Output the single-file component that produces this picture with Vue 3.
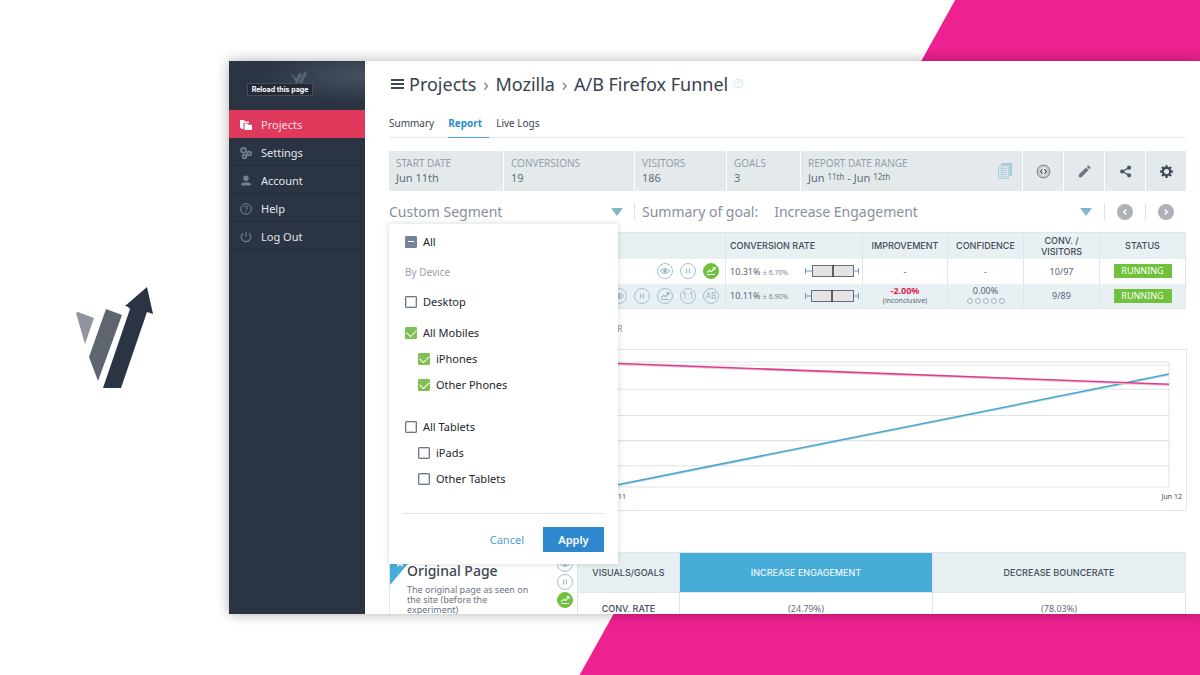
<script setup>
import { ref } from 'vue'

const nav = [
  { label: 'Projects', icon: 'folders' },
  { label: 'Settings', icon: 'cogs' },
  { label: 'Account', icon: 'user' },
  { label: 'Help', icon: 'help' },
  { label: 'Log Out', icon: 'power' },
]
const activeNav = ref('Projects')

const tabs = ['Summary', 'Report', 'Live Logs']
const activeTab = ref('Report')

const stats = [
  { key: 'start', label: 'START DATE', value: 'Jun 11th' },
  { key: 'conversions', label: 'CONVERSIONS', value: '19' },
  { key: 'visitors', label: 'VISITORS', value: '186' },
  { key: 'goals', label: 'GOALS', value: '3' },
]
const tools = [
  { name: 'Code', icon: 'code' },
  { name: 'Edit', icon: 'pencil' },
  { name: 'Share', icon: 'share' },
  { name: 'Configure', icon: 'gear' },
]

const groups = ref([
  [{ label: 'Desktop', checked: false }],
  [
    { label: 'All Mobiles', checked: true },
    { label: 'iPhones', checked: true, sub: true },
    { label: 'Other Phones', checked: true, sub: true },
  ],
  [
    { label: 'All Tablets', checked: false },
    { label: 'iPads', checked: false, sub: true },
    { label: 'Other Tablets', checked: false, sub: true },
  ],
])

const rows = [
  {
    actions: ['eye', 'pause', 'chart-on'],
    rate: '10.31%', margin: '± 6.70%', box: [7, 48, 28],
    ratio: '10/97',
  },
  {
    actions: ['eye', 'pause', 'chart', '1:1', 'AB'],
    rate: '10.11%', margin: '± 6.90%', box: [6, 48, 27],
    improvement: '-2.00%', note: '(inconclusive)', confidence: '0.00%',
    ratio: '9/89',
  },
]
const isText = (a) => a === '1:1' || a === 'AB'
const names = { eye: 'Preview', pause: 'Pause', chart: 'Show on chart', 'chart-on': 'Hide from chart' }
const gridLines = [28, 54, 79, 104]
</script>

<template>
  <div class="stage">
    <svg width="0" height="0" class="defs" aria-hidden="true">
      <symbol id="i-eye" viewBox="0 0 16 16"><path d="M2.500 8Q8 2.500 13.500 8Q8 13.500 2.500 8Z" fill="none" stroke="currentColor" stroke-width="1.200" /><circle cx="8" cy="8" r="2" fill="currentColor" /></symbol>
      <symbol id="i-pause" viewBox="0 0 16 16"><path d="M6.500 5.200V10.800M9.500 5.200V10.800" stroke="currentColor" stroke-width="1.200" /></symbol>
      <symbol id="i-chart" viewBox="0 0 16 16"><path d="M3.500 12H12.500M3.500 9.800L6.500 7.300L8.700 8.500L12.200 4.300M9.800 4.200H12.400V6.800" fill="none" stroke="currentColor" stroke-width="1.300" /></symbol>
      <symbol id="i-folders" viewBox="0 0 16 16"><path d="M2 3H6L7 4.500H11V6H5.500V12H3.500L2 10.500Z" fill="currentColor" /><path d="M6.500 6.500H9.500L10.500 7.800H14V13H6.500Z" fill="currentColor" /></symbol>
      <symbol id="i-cogs" viewBox="0 0 16 16"><g fill="none" stroke="currentColor" stroke-width="1.800"><circle cx="5.500" cy="5.200" r="2.400" /><circle cx="11.200" cy="8.500" r="1.900" /><circle cx="6.500" cy="11.500" r="1.900" /></g></symbol>
      <symbol id="i-user" viewBox="0 0 16 16"><circle cx="8" cy="5.300" r="2.700" fill="currentColor" /><path d="M3 12.500V11.500Q3 9.400 8 9.200Q13 9.400 13 11.500V12.500Z" fill="currentColor" /></symbol>
      <symbol id="i-help" viewBox="0 0 16 16"><circle cx="8" cy="8" r="5.300" fill="none" stroke="currentColor" /><path d="M6.300 6.800Q6.300 5 8 5Q9.800 5 9.800 6.600Q9.800 7.500 8 8.700V9.300M8 10.300V11.400" fill="none" stroke="currentColor" /></symbol>
      <symbol id="i-power" viewBox="0 0 16 16"><path d="M5 4.300A4.700 4.700 0 1 0 11 4.300M8 2.800V7.800" fill="none" stroke="currentColor" stroke-width="1.200" /></symbol>
      <symbol id="i-code" viewBox="0 0 16 16"><circle cx="8" cy="8" r="6.800" fill="none" stroke="currentColor" stroke-width=".8" /><circle cx="8" cy="8" r="5.200" fill="none" stroke="currentColor" stroke-width=".4" /><path d="M7 5.500L4.700 8L7 10.500M9 5.500L11.300 8L9 10.500" fill="none" stroke="currentColor" stroke-width="1.200" /></symbol>
      <symbol id="i-pencil" viewBox="0 0 16 16"><path d="M2 11.200L9.600 3.600L12.400 6.400L4.800 14H2ZM10.400 2.900L11.500 1.800Q12.200 1.400 12.800 2L14 3.200Q14.600 3.800 14.200 4.500L13.100 5.600Z" fill="currentColor" /></symbol>
      <symbol id="i-share" viewBox="0 0 16 16"><path d="M12 3.800L4.500 8L12 12.200" fill="none" stroke="currentColor" stroke-width="1.400" /><circle cx="11.800" cy="3.900" r="2.200" fill="currentColor" /><circle cx="4.400" cy="8" r="2.200" fill="currentColor" /><circle cx="11.800" cy="12.100" r="2.200" fill="currentColor" /></symbol>
      <symbol id="i-gear" viewBox="0 0 16 16"><circle cx="8" cy="8" r="3.900" fill="none" stroke="currentColor" stroke-width="2.200" /><path d="M8 1.200V4M8 12V14.800M1.200 8H4M12 8H14.800M3.200 3.200L5 5M11 11L12.800 12.800M3.200 12.800L5 11M11 5L12.800 3.200" stroke="currentColor" stroke-width="2.500" /></symbol>
      <symbol id="i-docs" viewBox="0 0 16 18"><path d="M4 1H15V14H12.500V3.500H4Z" fill="#a5cad6" /><path d="M1.500 4H11.500V16.500H1.500Z" fill="#d6e6eb" stroke="#b3d1db" /><path d="M3 6.500H10M3 8.500H10M3 10.500H10M3 12.500H10M3 14.500H10M5.500 5V16" stroke="#b3d1db" stroke-width=".8" /></symbol>
    </svg>

    <div class="brand">
      <svg class="logo" viewBox="0 0 78 102" role="img" aria-label="Arrow logo">
        <path d="M0 26Q1 25 2 25L18 31L9 57Z" fill="#8f969e" />
        <path d="M30 22L46 28L22 94L13 70Z" fill="#5e656f" />
        <path d="M49 19L71 0L77 27L71 25L45 101H27L54 22Q52 19 49 19Z" fill="#2a3442" />
      </svg>
    </div>

    <div class="window">
      <aside class="side">
        <div class="side-head">
          <svg class="mini" viewBox="0 0 17 12" aria-hidden="true"><path d="M0 4L3 5L5 10L6 12H8L12 3L9 2L6 8L4 4ZM9 12H12L16 4H17L16 0L13 3Z" fill="#596573" /></svg>
          <span class="tip" role="tooltip">Reload this page</span>
        </div>
        <nav>
          <a v-for="n in nav" :key="n.label" href="#" :class="['nav-item', { active: n.label === activeNav }]" @click.prevent="activeNav = n.label">
            <svg><use :href="'#i-' + n.icon" /></svg>{{ n.label }}
          </a>
        </nav>
      </aside>

      <main class="main">
        <header class="crumbs">
          <button class="burger" aria-label="Menu"><i></i><i></i><i></i></button>
          <a href="#">Projects</a><span class="sep">›</span>
          <a href="#">Mozilla</a><span class="sep">›</span>
          <h1>A/B Firefox Funnel</h1>
          <svg class="hint"><use href="#i-help" /></svg>
        </header>

        <nav class="tabs">
          <a v-for="t in tabs" :key="t" href="#" :class="{ on: t === activeTab }" @click.prevent="activeTab = t">{{ t }}</a>
        </nav>

        <section class="stats">
          <div v-for="s in stats" :key="s.key" :class="['stat', s.key]">
            <span class="k">{{ s.label }}</span><span class="v">{{ s.value }}</span>
          </div>
          <div class="stat range">
            <div>
              <span class="k">REPORT DATE RANGE</span>
              <span class="v">Jun <sup>11th</sup> - Jun <sup>12th</sup></span>
            </div>
            <svg class="docs"><use href="#i-docs" /></svg>
          </div>
          <button v-for="t in tools" :key="t.name" :class="['tool', t.icon]" :aria-label="t.name"><svg><use :href="'#i-' + t.icon" /></svg></button>
        </section>

        <section class="pickers">
          <div class="segment">
            <button class="segment-btn" aria-expanded="true">Custom Segment<i class="tri"></i></button>
            <form class="panel" @submit.prevent>
              <label class="opt"><input type="checkbox" :indeterminate.prop="true" />All</label>
              <p class="by">By Device</p>
              <div v-for="(g, gi) in groups" :key="gi" class="group">
                <label v-for="o in g" :key="o.label" :class="['opt', { sub: o.sub }]"><input v-model="o.checked" type="checkbox" />{{ o.label }}</label>
              </div>
              <div class="panel-actions">
                <button type="button" class="cancel">Cancel</button>
                <button type="submit" class="apply">Apply</button>
              </div>
            </form>
          </div>
          <div class="goal">
            <label for="goal">Summary of goal:</label>
            <select id="goal"><option>Increase Engagement</option></select>
            <i class="tri"></i>
          </div>
          <div class="pager"><button aria-label="Previous goal"><svg viewBox="0 0 16 16"><path d="M9.300 5.500L6.800 8L9.300 10.500" /></svg></button></div>
          <div class="pager"><button aria-label="Next goal"><svg viewBox="0 0 16 16"><path d="M6.800 5.500L9.300 8L6.800 10.500" /></svg></button></div>
        </section>

        <table class="results">
          <colgroup><col /><col class="c-rate" /><col class="c-imp" /><col class="c-conf" /><col class="c-conf" /><col class="c-stat" /></colgroup>
          <thead>
            <tr><td></td><th class="left">CONVERSION RATE</th><th>IMPROVEMENT</th><th>CONFIDENCE</th><th class="wrap">CONV. / VISITORS</th><th>STATUS</th></tr>
          </thead>
          <tbody>
            <tr v-for="r in rows" :key="r.rate">
              <td>
                <div class="acts">
                  <button v-for="a in r.actions" :key="a" :class="['round', { on: a === 'chart-on' }]" :aria-label="names[a]">
                    <template v-if="isText(a)">{{ a }}</template>
                    <svg v-else><use :href="'#i-' + a.replace('-on', '')" /></svg>
                  </button>
                </div>
              </td>
              <td>
                <div class="rate">
                  <span>{{ r.rate }} <small>{{ r.margin }}</small></span>
                  <svg width="54" height="12" viewBox="0 0 54 12" aria-hidden="true">
                    <path d="M.5 3V9M53.500 3V9M0 6H54" stroke="#6c95bd" fill="none" />
                    <rect :x="r.box[0] + .5" y=".5" :width="r.box[1] - r.box[0]" height="11" fill="#e4e4e6" stroke="#6d6f73" />
                    <path :d="'M' + r.box[2] + ' 0V12'" stroke="#333" stroke-width="1.500" />
                  </svg>
                </div>
              </td>
              <td><template v-if="r.improvement"><b class="neg">{{ r.improvement }}</b><span class="note">{{ r.note }}</span></template><template v-else>-</template></td>
              <td><template v-if="r.confidence"><span class="pct">{{ r.confidence }}</span><span class="dots"><i v-for="n in 5" :key="n"></i></span></template><template v-else>-</template></td>
              <td>{{ r.ratio }}</td>
              <td><span class="badge">RUNNING</span></td>
            </tr>
          </tbody>
        </table>

        <p class="chart-title">R</p>
        <figure class="chart">
          <svg class="plot" viewBox="0 0 764 126" preserveAspectRatio="none" role="img" aria-label="Conversions by day">
            <g class="grid">
              <rect x="1" y="1" width="762" height="124" />
              <path d="M0 4H764" />
              <path v-for="y in gridLines" :key="y" :d="'M0 ' + y + 'H764'" />
            </g>
            <path d="M212 126L763 14" class="halo" />
            <path d="M212 125L763 13" class="line blue" />
            <path d="M212 3L763 24" class="halo rose" />
            <path d="M212 2L763 23" class="line pink" />
          </svg>
          <figcaption><span>11</span><span>Jun 12</span></figcaption>
        </figure>

        <section class="compare">
          <article class="card">
            <i class="ribbon"><svg viewBox="0 0 10 10"><path d="M5 0L6.500 3.500L10 3.800L7.300 6.200L8.200 10L5 8L1.800 10L2.700 6.200L0 3.800L3.500 3.500Z" fill="#fff" /></svg></i>
            <div class="card-text">
              <h2>Original Page</h2>
              <p>The original page as seen on the site (before the experiment)</p>
            </div>
            <div class="stack">
              <button class="round" aria-label="Preview"><svg><use href="#i-eye" /></svg></button>
              <button class="round" aria-label="Pause"><svg><use href="#i-pause" /></svg></button>
              <button class="round on" aria-label="Hide from chart"><svg><use href="#i-chart" /></svg></button>
            </div>
          </article>
          <table>
            <colgroup><col class="c-vis" /><col /><col /></colgroup>
            <thead><tr><th>VISUALS/GOALS</th><th class="cur">INCREASE ENGAGEMENT</th><th>DECREASE BOUNCERATE</th></tr></thead>
            <tbody><tr><th>CONV. RATE</th><td>(24.79%)</td><td>(78.03%)</td></tr></tbody>
          </table>
        </section>
      </main>
    </div>
  </div>
</template>

<style>
body { margin: 0; background: #fff; }
</style>

<style scoped>
* { box-sizing: border-box; }
.stage { position: relative; isolation: isolate; display: grid; grid-template-columns: 229px minmax(0, 1fr); height: 100vh; padding: 61px 0; overflow: hidden; font-family: "Noto Sans", sans-serif; font-size: 11px; color: #3c4450; background: #fff; }
.stage::before { content: ""; position: absolute; inset: 0; z-index: -1; background: #ed218f; clip-path: polygon(79.600% 0, 100% 0, 100% 100%, 48.300% 100%); }
.defs { position: absolute; }
button { font: inherit; border: 0; padding: 0; background: none; color: inherit; cursor: pointer; }
a { color: inherit; text-decoration: none; }
svg { display: block; }
.brand { display: flex; align-items: center; justify-content: center; }
.logo { width: 78px; height: 102px; }

.window { display: grid; grid-template-columns: 136px minmax(0, 1fr); min-height: 0; background: #fff; box-shadow: 0 0 12px rgba(0, 0, 0, .32); clip-path: inset(-20px 0 -20px -20px); }
.side { background: #2b3443; overflow: hidden; }
.side-head { display: flex; flex-direction: column; align-items: center; height: 49px; padding-top: 10px; background: radial-gradient(ellipse at 100% 30%, #455261, #2b3443 55%); }
.mini { width: 17px; height: 12px; margin-left: 2px; }
.tip { margin-right: 34px; border: 1px solid #454c58; background: #242b37; color: #fff; font: bold 7px/11px Inter, sans-serif; padding: 0 4px; }
.nav-item { display: flex; align-items: center; gap: 7px; height: 28px; padding: 2px 0 0 9px; border-bottom: 1px solid #242c38; color: #e3e7ec; font-size: 11px; }
.nav-item svg { width: 16px; height: 16px; color: #75808e; }
.nav-item.active { background: #df3a5b; border-color: #df3a5b; color: #fbdde3; }
.nav-item.active svg { color: #fff; }

.main { min-width: 0; padding: 0 14px 0 24px; overflow: hidden; }
.crumbs { display: flex; align-items: center; height: 45px; font-size: 18px; color: #38414f; }
.burger { display: grid; gap: 2px; width: 13px; margin: 0 5px 0 2px; }
.burger i { height: 2px; background: #3e4651; }
.sep { width: 19px; text-align: center; color: #7d858e; }
h1 { margin: 0; font: inherit; }
.hint { width: 13px; height: 13px; margin-left: 4px; color: #c8dbe2; }
.tabs { display: flex; gap: 7px; border-bottom: 1px solid #e6eaec; height: 32px; font-size: 10px; }
.tabs a { display: flex; align-items: center; padding: 2px 7px 0 0; height: 32px; border-bottom: 1px solid transparent; }
.tabs a.on { border-color: #4aa0dc; color: #2f8dcb; font-weight: bold; }

.stats { display: flex; gap: 1px; margin-top: 13px; height: 40px; }
.stat, .tool { background: #e4eaec; }
.stat { padding: 6px 7px; font-size: 11px; line-height: 14px; color: #626c78; }
.k, .v { display: block; }
.k { font-size: 10px; line-height: 13px; color: #959ea8; white-space: nowrap; }
.v { line-height: 16px; }
.v sup { font-size: 8px; line-height: 8px; vertical-align: 2px; }
.start { width: 114px; }
.conversions { width: 130px; }
.visitors { width: 91px; }
.goals { width: 73px; }
.range { flex: 1; display: flex; justify-content: space-between; align-items: center; }
.docs { width: 16px; height: 18px; margin-right: 2px; }
.tool { width: 40px; display: grid; place-items: center; color: #4d5663; }
.tool svg { width: 15px; height: 15px; }
.gear { color: #3f4855; }
.pencil { color: #6b7480; }

.pickers { display: flex; align-items: center; height: 41px; font-size: 14px; color: #86909b; }
.segment { position: relative; width: 229px; }
.segment-btn { display: flex; justify-content: space-between; align-items: center; width: 234px; height: 20px; }
.tri { border: 6px solid transparent; border-top: 8px solid #86b5c8; border-bottom: 0; }
.goal { flex: 1; display: flex; align-items: center; gap: 16px; margin-left: 16px; padding: 0 12px 0 7px; border-left: 1px solid #dce2e5; height: 17px; }
.goal label { white-space: nowrap; }
.goal select { flex: 1; appearance: none; border: 0; background: none; font: inherit; color: inherit; padding: 0; }
.pager { width: 41px; height: 17px; display: grid; place-items: center; border-left: 1px solid #dce2e5; }
.pager button { width: 16px; height: 16px; border-radius: 50%; background: #aeb1b8; }
.pager path { fill: none; stroke: #fff; stroke-width: 1.500; }

.panel { position: absolute; z-index: 2; top: 22px; left: 0; width: 229px; padding: 5px 14px 12px 16px; background: #fff; box-shadow: 0 0 6px rgba(60, 80, 90, .22); font-size: 11px; color: #23272d; }
.opt { display: flex; align-items: center; gap: 6px; height: 26px; }
.opt.sub { padding-left: 13px; }
.opt input { appearance: none; position: relative; width: 12px; height: 12px; margin: 0; border: 1px solid #6c7888; border-radius: 1px; box-shadow: inset 0 0 0 1px #c9ced5; }
.opt input:checked { background: #80bf51; border-color: #80bf51; box-shadow: none; }
.opt input:indeterminate { background: #75839a; border-color: #75839a; box-shadow: none; }
.opt input::after { content: ""; position: absolute; }
.opt input:checked::after { left: 1px; top: 1px; width: 8px; height: 5px; border: solid #fff; border-width: 0 0 1px 1px; transform: rotate(-45deg); }
.opt input:indeterminate::after { left: 2px; top: 4px; width: 6px; height: 1px; background: #fff; }
.by { margin: 0; font-size: 10px; line-height: 34px; color: #99a2ac; }
.group + .group { margin-top: 5px; }
.group + .group + .group { margin-top: 16px; }
.panel-actions { display: flex; justify-content: flex-end; gap: 19px; margin: 21px 0 0 -3px; padding-top: 13px; border-top: 1px solid #e0e7ec; }
.cancel { color: #4ba3d3; }
.apply { width: 61px; height: 25px; background: #2f88cd; color: #fff; font-weight: 600; }

table { width: 100%; table-layout: fixed; border-collapse: collapse; }
th, td { padding: 0; border: 1px solid #dde7eb; text-align: center; }
th { font-family: Inter, sans-serif; font-weight: 500; }
.results { font-size: 9px; color: #5a6470; }
.results thead { background: #e9f0f3; color: #424b58; }
.results tbody tr:nth-child(2) { background: #e9f0f3; }
.results td { height: 25px; border-top: 0; border-bottom: 0; }
.results thead td { border-top: 1px solid #dde7eb; }
.results tbody tr:last-child td { border-bottom: 1px solid #dde7eb; }
.results th { height: 26px; line-height: 11px; border-bottom: 0; }
.results .left { text-align: left; padding-left: 4px; }
.results .wrap { padding: 0 10px; }
.c-rate { width: 137px; }
.c-imp { width: 85px; }
.c-conf { width: 76px; }
.c-stat { width: 86px; }
.acts { display: flex; justify-content: flex-end; gap: 7px; padding-right: 6px; }
.round { display: grid; place-items: center; width: 16px; height: 16px; border: 1px solid #a3c2ce; border-radius: 50%; color: #96b7c4; font-size: 8px; line-height: 14px; }
.round svg { width: 14px; height: 14px; }
.round.on { background: #70c13b; border-color: #70c13b; color: #fff; }
.rate { display: flex; justify-content: space-between; align-items: center; padding: 0 3px 0 4px; white-space: nowrap; }
.rate small { font-size: 7px; color: #7f8893; }
.neg { display: block; line-height: 10px; color: #dc2450; }
.note { display: block; font-size: 7px; line-height: 9px; }
.pct { display: block; line-height: 10px; }
.dots { display: flex; justify-content: center; gap: 2px; padding: 2px 0; }
.dots i { width: 6px; height: 6px; border: 1px solid #aab4bc; border-radius: 50%; }
.badge { display: inline-block; width: 58px; background: #70c13b; color: #fff; line-height: 14px; }

.chart-title { margin: 13px 0 0 228px; height: 27px; font-size: 9px; line-height: 13px; color: #8b949d; }
.chart { margin: 0 -1px 0 0; padding: 11px 16px 0 0; border: 1px solid #dde6ea; height: 162px; }
.plot { width: 100%; height: 127px; }
.grid { fill: none; stroke: #dfe3e5; }
.line { fill: none; stroke-width: 1.500; }
.blue { stroke: #49a5cb; }
.pink { stroke: #da3f8b; }
.halo { fill: none; stroke: #c4dfe9; stroke-width: 1.500; }
.rose { stroke: #f2c5da; }
figcaption { display: flex; justify-content: space-between; margin: 4px -12px 0 228px; font-size: 7px; line-height: 10px; }

.compare { display: flex; margin-top: 41px; font-size: 9px; }
.card { position: relative; width: 188px; flex: none; display: flex; justify-content: space-between; padding: 3px 4px 0 17px; border: 1px solid #dde7eb; border-right: 0; }
.ribbon { position: absolute; top: 0; left: 0; width: 27px; height: 32px; padding: 4px 0 0 5px; background: #47acd7; clip-path: polygon(0 0, 100% 0, 0 100%); }
.ribbon svg { width: 10px; height: 10px; }
.card-text { position: relative; }
.card h2 { margin: 5px 0 4px; font-size: 14px; line-height: 20px; font-weight: 500; white-space: nowrap; color: #3c4552; }
.card p { margin: 0; width: 130px; line-height: 10px; color: #6b747f; }
.stack { display: grid; align-content: start; gap: 2px; }
.compare th { color: #424b58; }
.compare td { color: #626c78; }
.compare thead th { height: 40px; background: #e9f0f3; }
.compare thead .cur { background: #47acd7; color: #e8f6fc; }
.compare tbody tr { height: 31px; }
.c-vis { width: 102px; }
</style>
